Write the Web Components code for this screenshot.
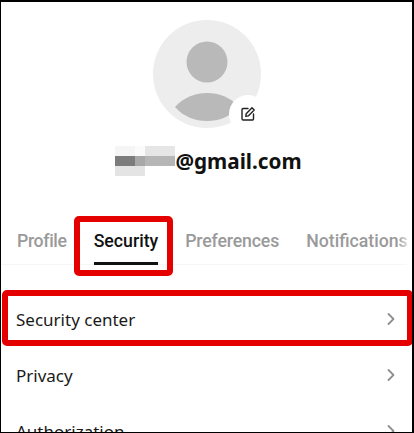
<!DOCTYPE html>
<html><head><meta charset="utf-8"><style>
html,body{margin:0;padding:0;background:#fff}
body{width:414px;height:433px;overflow:hidden;font-family:"Noto Sans","Open Sans",sans-serif}
</style></head><body>
<app-frame>
  <profile-head email="@gmail.com"></profile-head>
  <tab-bar></tab-bar>
  <menu-row label="Security center" marked></menu-row>
  <menu-row label="Privacy"></menu-row>
  <menu-row label="Authorization"></menu-row>
</app-frame>
<script>
class AppFrame extends HTMLElement{constructor(){super();this.attachShadow({mode:'open'}).innerHTML=`<style>
:host{display:block;box-sizing:border-box;width:414px;height:433px;overflow:hidden;position:relative;background:#fff;border-style:solid;border-color:#000;border-width:2px 2px 1px 1px}
.in{display:flex;flex-direction:column}
</style><div class="in"><slot></slot></div>`}}
customElements.define('app-frame',AppFrame);

class ProfileHead extends HTMLElement{constructor(){super();
 this.attachShadow({mode:'open'}).innerHTML=`<style>
:host{display:flex;flex-direction:column;align-items:center;padding-top:18px}
.av{position:relative;width:108px;height:108px;flex:none}
.av svg.p{display:block}
.badge{position:absolute;left:76px;top:75px;width:38px;height:38px;border-radius:50%;background:#fff;display:flex;align-items:center;justify-content:center}
.em{display:flex;align-items:center;margin-top:18px;height:30px;color:#111;font:700 20.7px "Noto Sans",sans-serif;padding-left:4px}
.mos{display:grid;grid-template-columns:20px 10px 30px;grid-template-rows:10px 10px 10px;width:60px;height:30px;flex:none}
.mos i{display:block}
</style>
<div class="av">
<svg class="p" width="108" height="108" viewBox="0 0 108 108"><circle cx="54" cy="54" r="54" fill="#ededed"/><circle cx="54" cy="42" r="20.5" fill="#b9b9b9"/><path d="M22 87C31 77 43 73 54 73C66 73 77 77 86 87C77 97 66 101 54 101C42 101 31 97 22 87Z" fill="#b9b9b9"/></svg>
<div class="badge"><svg width="16" height="16" viewBox="0 0 16 16" fill="none" stroke="#222" stroke-width="1.4" stroke-linecap="round" stroke-linejoin="round"><path d="M8 2.5H3.2A1.2 1.2 0 0 0 2 3.7V12.8A1.2 1.2 0 0 0 3.2 14H12.3A1.2 1.2 0 0 0 13.5 12.8V8"/><path d="M12 1.8L14.2 4L8.3 9.9L5.8 10.3L6.2 7.7Z"/></svg></div>
</div>
<div class="em"><div class="mos" aria-hidden="true">
<i style="background:#f5f5f5"></i><i style="background:#fbfbfb"></i><i style="background:#e6e6e6"></i>
<i style="background:#7c7c7c"></i><i style="background:#a8a8a8"></i><i style="background:#b6b6b6"></i>
<i style="background:#e4e4e4"></i><i style="background:#e4e4e4"></i><i style="background:#fff"></i>
</div><span>${this.getAttribute('email')}</span></div>`}}
customElements.define('profile-head',ProfileHead);

class TabBar extends HTMLElement{constructor(){super();this.attachShadow({mode:'open'}).innerHTML=`<style>
:host{display:block;margin-top:40px;margin-bottom:14px;overflow:hidden;font:500 17.7px Roboto,sans-serif;box-sizing:border-box;height:61px;position:relative}
.row{display:flex;gap:27px;padding-left:16px;white-space:nowrap;height:60px;position:relative}
.t{color:#9a9a9a;position:relative;line-height:50px;height:100%}
.t.on{color:#111}
.t.p{letter-spacing:-.35px}
.t.q{letter-spacing:-.15px}
.t.on::after{content:"";position:absolute;left:0;right:0;top:46px;height:2.5px;background:#111}
.mark{position:absolute;left:-20px;right:-15px;top:0;bottom:0;box-sizing:border-box;border:6px solid #e50000;border-radius:5px}
.line{position:absolute;left:0;right:0;top:48px;height:1px;background:#f6f6f6}
.fade{position:absolute;right:0;top:0;bottom:0;width:14px;background:linear-gradient(90deg,#fff0,#fff)}
</style><div class="line"></div><div class="row">
<span class="t p">Profile</span><span class="t on">Security<span class="mark"></span></span><span class="t q">Preferences</span><span class="t">Notifications</span></div><div class="fade"></div>`}}
customElements.define('tab-bar',TabBar);

class MenuRow extends HTMLElement{constructor(){super();this.attachShadow({mode:'open'}).innerHTML=`<style>
:host{display:flex;align-items:center;justify-content:space-between;height:56px;flex:none;padding:0 16px 0 15px;position:relative;font:400 17px "Noto Sans",sans-serif;color:#1a1a1a}
svg{display:block}
.mark{position:absolute;left:1px;right:-1px;top:-1px;bottom:1px;box-sizing:border-box;border:6px solid #e50000;border-radius:5px}
</style><span>${this.getAttribute('label')}</span><svg width="10" height="14" viewBox="0 0 10 14" fill="none" stroke="#8f8f8f" stroke-width="1.8" stroke-linecap="round" stroke-linejoin="round"><path d="M2.5 2L7.5 7L2.5 12"/></svg>${this.hasAttribute('marked')?'<span class="mark"></span>':''}`}}
customElements.define('menu-row',MenuRow);
</script>
</body></html>
